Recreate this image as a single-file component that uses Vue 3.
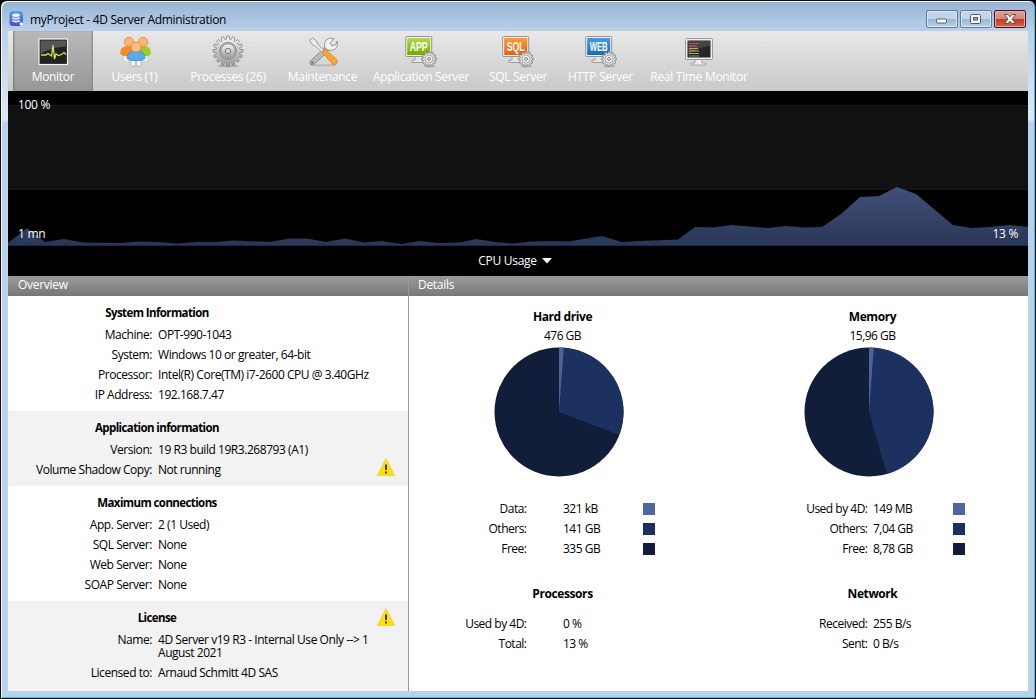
<script setup>
const tabs = [
  { id: 'monitor', label: 'Monitor', width: 80, active: true },
  { id: 'users', label: 'Users (1)', width: 83 },
  { id: 'processes', label: 'Processes (26)', width: 104 },
  { id: 'maintenance', label: 'Maintenance', width: 85 },
  { id: 'app', label: 'Application Server', width: 112, tag: 'APP', light: '#b4dc4a', dark: '#74a800' },
  { id: 'sql', label: 'SQL Server', width: 82, tag: 'SQL', light: '#ff9a3c', dark: '#e85f10' },
  { id: 'http', label: 'HTTP Server', width: 83, tag: 'WEB', light: '#4a9ce4', dark: '#1767b8' },
  { id: 'rtm', label: 'Real Time Monitor', width: 114 },
]

const sections = [
  {
    title: 'System Information',
    rows: [
      ['Machine:', 'OPT-990-1043'],
      ['System:', 'Windows 10 or greater, 64-bit'],
      ['Processor:', 'Intel(R) Core(TM) i7-2600 CPU @ 3.40GHz'],
      ['IP Address:', '192.168.7.47'],
    ],
  },
  {
    title: 'Application information',
    warn: 'low',
    rows: [
      ['Version:', '19 R3 build 19R3.268793 (A1)'],
      ['Volume Shadow Copy:', 'Not running'],
    ],
  },
  {
    title: 'Maximum connections',
    rows: [
      ['App. Server:', '2 (1 Used)'],
      ['SQL Server:', 'None'],
      ['Web Server:', 'None'],
      ['SOAP Server:', 'None'],
    ],
  },
  {
    title: 'License',
    warn: 'high',
    rows: [
      ['Name:', '4D Server v19 R3 - Internal Use Only --> 1 August 2021'],
      ['Licensed to:', 'Arnaud Schmitt 4D SAS'],
    ],
  },
]

const details = [
  {
    id: 'drive',
    title: 'Hard drive',
    total: '476 GB',
    split: 111,
    legend: [['Data:', '321 kB', 'c1'], ['Others:', '141 GB', 'c2'], ['Free:', '335 GB', 'c3']],
    second: 'Processors',
    rows: [['Used by 4D:', '0 %'], ['Total:', '13 %']],
  },
  {
    id: 'memory',
    title: 'Memory',
    total: '15,96 GB',
    split: 164,
    legend: [['Used by 4D:', '149 MB', 'c1'], ['Others:', '7,04 GB', 'c2'], ['Free:', '8,78 GB', 'c3']],
    second: 'Network',
    rows: [['Received:', '255 B/s'], ['Sent:', '0 B/s']],
  },
]

function slice(from, to) {
  const pt = (deg) => {
    const a = (deg * Math.PI) / 180
    return `${(65 + 64.5 * Math.sin(a)).toFixed(2)} ${(65 - 64.5 * Math.cos(a)).toFixed(2)}`
  }
  return `M65 65L${pt(from)}A64.5 64.5 0 ${to - from > 180 ? 1 : 0} 1 ${pt(to)}Z`
}

function gear(cx, cy, outer, inner, teeth) {
  const pts = []
  const step = (Math.PI * 2) / teeth
  for (let i = 0; i < teeth; i++) {
    const a = i * step - Math.PI / 2
    for (const [o, r] of [[-0.31, inner], [-0.22, outer], [0.22, outer], [0.31, inner]]) {
      pts.push(`${(cx + r * Math.cos(a + o * step)).toFixed(2)},${(cy + r * Math.sin(a + o * step)).toFixed(2)}`)
    }
  }
  return pts.join(' ')
}

const usage = [
  [0, 152], [19, 137], [37, 151], [56, 148], [75, 151.5], [112, 152], [132, 150.5], [149, 151], [169, 152.5],
  [189, 151], [207, 151], [225, 149.5], [262, 151], [281, 147.5], [299, 147.5], [318, 151], [337, 147.5],
  [356, 151.5], [374, 150], [393, 153], [412, 150], [430, 152], [452, 151.5], [468, 148], [487, 151], [505, 152.5],
  [523, 150.5], [542, 150], [560, 150.5], [594, 145], [614, 151], [632, 150], [670, 148.5], [687, 136],
  [705, 136.5], [724, 134], [759, 137], [778, 135], [795, 136.5], [814, 136], [833, 123], [852, 106], [871, 105],
  [889, 96], [908, 103], [945, 134], [963, 137], [982, 136], [1001, 134], [1020, 136],
]
const area = `0,154 ${usage.map((p) => p.join(',')).join(' ')} 1020,154`
</script>

<template>
  <div class="desktop">
    <div class="window">
      <header class="titlebar">
        <svg class="logo" width="16" height="16" viewBox="0 0 16 16">
          <defs>
            <linearGradient id="lg" x1="0" y1="0" x2="0" y2="1">
              <stop offset="0" stop-color="#4ea2f6" /><stop offset="1" stop-color="#4f49c9" />
            </linearGradient>
          </defs>
          <rect x="0.5" y="0" width="13.5" height="15" rx="3.5" fill="url(#lg)" />
          <ellipse cx="7" cy="4.2" rx="3.8" ry="1.7" fill="#fff" />
          <path d="M3.2 5.8c1 1.5 6.6 1.5 7.6 0v1.800c-1 1.500-6.600 1.500-7.600 0zM3.200 8.600c1 1.500 6.600 1.500 7.600 0v1.600c-1 1.600-6.600 1.600-7.600 0z" fill="#e4edff" />
          <circle cx="12.300" cy="13" r="1.700" fill="#fff" />
        </svg>
        <span class="caption">myProject - 4D Server Administration</span>
        <div class="controls">
          <div class="ctl">
            <svg width="30" height="16" viewBox="0 0 30 16"><rect x="9.500" y="8" width="10" height="4" rx="1" fill="#fff" stroke="#53606f" /></svg>
          </div>
          <div class="ctl">
            <svg width="30" height="16" viewBox="0 0 30 16">
              <rect x="9.500" y="3.500" width="10" height="9" rx="1" fill="#f6f6f6" stroke="#4f5c6c" />
              <rect x="12.500" y="6.500" width="4" height="2.500" fill="#8ea9c8" stroke="#4f5c6c" />
            </svg>
          </div>
          <div class="ctl close">
            <svg width="30" height="16" viewBox="0 0 30 16">
              <path d="M9.500 3.500H13L15 5.800L17 3.500H20.500L17 8L20.500 12.500H17L15 10.200L13 12.500H9.500L13 8Z" fill="#f7f4f4" stroke="#5b5560" />
            </svg>
          </div>
        </div>
      </header>

      <main class="client">
        <nav class="toolbar">
          <div v-for="t in tabs" :key="t.id" class="tab" :class="{ active: t.active }" :style="{ width: t.width + 'px' }">
            <svg class="icon" width="34" height="34" viewBox="0 0 34 34">
              <defs>
                <linearGradient id="metal" x1="0" y1="0" x2="0" y2="1">
                  <stop offset="0" stop-color="#f8f8f8" /><stop offset="1" stop-color="#9b9b9b" />
                </linearGradient>
                <linearGradient :id="'scr-' + t.id" x1="0" y1="0" x2="0" y2="1">
                  <stop offset="0" :stop-color="t.light || '#555'" /><stop offset="1" :stop-color="t.dark || '#222'" />
                </linearGradient>
              </defs>

              <g v-if="t.id === 'monitor'">
                <rect x="3" y="5" width="28.500" height="25.500" fill="#222" stroke="#f4f4f4" stroke-width="1.200" />
                <path d="M4.500 6.500h25.500v6Q15 13 4.500 20z" fill="#555" />
                <path d="M5 21h5l2-1.500 2 1.500 1.500 1 1.500-11 1.500 14 1.500-5 2.500 1.500 3-1 2.500-2 2 2" fill="none" stroke="#c5e850" stroke-width="1.300" />
              </g>

              <g v-else-if="t.id === 'users'" transform="translate(1 1.500)">
                <path d="M4.500 20h5v6h-5zM24 20h5v6h-5z" fill="#f1f1f1" stroke="#bbb" stroke-width=".5" />
                <path d="M1 18Q1 11 8 10.500H12Q15 11 15 19Q9 22 3 20Z" fill="#f68b25" />
                <path d="M19 18Q18 11 24 10.500H26Q32 11 32 18Q30 22 23 20Z" fill="#9fcb25" />
                <circle cx="10" cy="6.500" r="4.700" fill="#fbb673" stroke="#ea8535" stroke-width=".8" />
                <circle cx="24" cy="6.500" r="4.700" fill="#fbb673" stroke="#ea8535" stroke-width=".8" />
                <path d="M12 23h4.500v7.500H12zM17.500 23H22v7.500h-4.500z" fill="#f7f7f7" stroke="#aaa" stroke-width=".7" />
                <path d="M8 23Q8 16 14 15.500H20Q26 16 26 23Q22 26 17 25Q12 26 8 23Z" fill="#58a9e4" stroke="#3d8ac9" stroke-width=".7" />
                <circle cx="17" cy="11.500" r="5" fill="#fdbf85" stroke="#ea8535" stroke-width=".8" />
              </g>

              <g v-else-if="t.id === 'processes'">
                <ellipse cx="17" cy="32" rx="11" ry="1.500" fill="#8888" />
                <polygon :points="gear(17, 17, 15, 12, 16)" fill="url(#metal)" stroke="#828282" stroke-width=".8" />
                <circle cx="17" cy="17" r="8.500" fill="#b3b3b3" stroke="#8b8b8b" />
                <circle cx="17" cy="17" r="7" fill="url(#metal)" stroke="#8b8b8b" stroke-width=".6" />
                <circle cx="17" cy="17" r="2.700" fill="#d6d6d6" stroke="#777" stroke-width=".9" />
              </g>

              <g v-else-if="t.id === 'maintenance'">
                <ellipse cx="17" cy="31.300" rx="13" ry="1" fill="#9997" />
                <path d="M23 13L6.500 28.500" stroke="#858585" stroke-width="5.500" stroke-linecap="round" />
                <path d="M23 13L6.500 28.500" stroke="#bdbdbd" stroke-width="4" stroke-linecap="round" />
                <path d="M28 4.500L24 9L26 12L30 10.500L31 7Q33 14 27 16Q23 18 19 14Q17 10 20 6Q23 3 28 4.500Z" fill="#f0f0f0" stroke="#858585" stroke-width=".8" />
                <circle cx="6.500" cy="28.500" r="1.200" fill="#777" />
                <path d="M3.500 6l3-2 4 3 1 3 7 7-2 2-7-7-3-1z" fill="#eee" stroke="#858585" stroke-width=".8" />
                <path d="M16 18l3-3 12 11q1 5-4 4.500z" fill="#ffa52e" stroke="#d47b1e" stroke-width=".8" />
              </g>

              <g v-else-if="t.id === 'rtm'">
                <rect x="3.500" y="4.500" width="27" height="21" rx="1" fill="#ededed" stroke="#999" />
                <rect x="5.500" y="6.500" width="23" height="17" fill="#262626" />
                <path d="M6 7h22v5Q16 13 6 21z" fill="#454545" />
                <path d="M13 26v3H9v2h15v-2h-4v-3" fill="#eee" stroke="#999" stroke-width=".8" />
                <g stroke-width=".9">
                  <path d="M7 9.500h10" stroke="#df3a5a" /><path d="M7 12h8" stroke="#e66a58" /><path d="M7 14.500h9" stroke="#e9a84e" />
                  <path d="M7 17h10" stroke="#e0c45a" /><path d="M7 19.500h10" stroke="#a9b45a" /><path d="M7 22h10" stroke="#65a27a" />
                </g>
              </g>

              <g v-else>
                <path d="M11 22v4H8v2.500h14V24" fill="#e4e4e4" stroke="#999" stroke-width=".9" />
                <rect x="1.700" y="2.500" width="26" height="20" rx="1" fill="#f1f1f1" stroke="#969696" />
                <rect x="3.200" y="4" width="23" height="17" :fill="`url(#scr-${t.id})`" />
                <text x="14.700" y="17" class="tag" text-anchor="middle" textLength="18" lengthAdjust="spacingAndGlyphs">{{ t.tag }}</text>
                <ellipse cx="25.500" cy="32.500" rx="6" ry="1" fill="#9998" />
                <polygon :points="gear(25, 25, 7.500, 5.900, 12)" fill="#e0e0e0" stroke="#7c7c7c" stroke-width=".8" />
                <circle cx="25" cy="25" r="4" fill="#ededed" stroke="#8f8f8f" stroke-width=".7" />
                <circle cx="25" cy="25" r="1.500" fill="#ddd" stroke="#777" stroke-width=".8" />
              </g>
            </svg>
            <span>{{ t.label }}</span>
          </div>
        </nav>

        <section class="chart">
          <svg class="plot" width="1020" height="155" viewBox="0 0 1020 155">
            <defs>
              <linearGradient id="cpu" gradientUnits="userSpaceOnUse" x1="0" y1="96" x2="0" y2="154">
                <stop offset="0" stop-color="#3f5079" /><stop offset="1" stop-color="#293657" />
              </linearGradient>
            </defs>
            <rect y="14" width="1020" height="85" fill="#111" />
            <path d="M0 14.500H1020M0 98.500H1020" stroke="#181818" />
            <polygon :points="area" fill="url(#cpu)" />
            <path d="M0 154.500H1020" stroke="#1c2943" />
          </svg>
          <span class="mark top">100 %</span>
          <span class="mark left">1 mn</span>
          <span class="mark right">13 %</span>
          <div class="picker">
            <span>CPU Usage</span>
            <svg width="10" height="6" viewBox="0 0 10 6"><path d="M0 0H10L5 5.500Z" fill="#fff" /></svg>
          </div>
        </section>

        <div class="panes">
          <section class="overview">
            <h2>Overview</h2>
            <div v-for="s in sections" :key="s.title" class="group">
              <h3>{{ s.title }}</h3>
              <div v-for="r in s.rows" :key="r[0]" class="row">
                <span class="key">{{ r[0] }}</span>
                <span class="val">{{ r[1] }}</span>
              </div>
              <svg v-if="s.warn" class="warn" :class="s.warn" width="18" height="18" viewBox="0 0 18 18">
                <path d="M9 .5L17.700 17.500H.3Z" fill="#ffe000" stroke="#e8c63c" stroke-width=".6" />
                <path d="M8 6.500h2v5.500H8zM8 13.500h2v2H8z" fill="#3d3820" />
              </svg>
            </div>
          </section>

          <section class="details">
            <h2>Details</h2>
            <div class="columns">
              <article v-for="d in details" :key="d.id" :class="d.id">
                <h3>{{ d.title }}</h3>
                <p class="total">{{ d.total }}</p>
                <svg class="pie" width="130" height="130" viewBox="0 0 130 130">
                  <circle cx="65" cy="65" r="64.500" fill="#111e3a" />
                  <path :d="slice(4, d.split)" fill="#1c3160" />
                  <path :d="slice(0, 4.300)" fill="#4c629c" />
                </svg>
                <div class="legend">
                  <template v-for="l in d.legend" :key="l[0]">
                    <span class="key">{{ l[0] }}</span><span>{{ l[1] }}</span><i :class="l[2]"></i>
                  </template>
                </div>
                <h3 class="second">{{ d.second }}</h3>
                <div class="legend">
                  <template v-for="l in d.rows" :key="l[0]">
                    <span class="key">{{ l[0] }}</span><span>{{ l[1] }}</span><i></i>
                  </template>
                </div>
              </article>
            </div>
          </section>
        </div>
      </main>
    </div>
  </div>
</template>

<style>
body { margin: 0; overflow: hidden; }
</style>

<style scoped>
* { box-sizing: border-box; }
.desktop {
  width: 1036px; height: 699px; background: #000;
  font: 12px/20px "Open Sans", "Noto Sans", sans-serif; letter-spacing: -0.3px; color: #000;
}
.window {
  width: 1036px; height: 699px; padding: 0 6px 6px; border: 1px solid #111;
  border-radius: 7px 7px 0 0; background: linear-gradient(#98b3d2 0, #b9d1ea 30px, #dce8f5 118px, #b9d1ea 122px);
  box-shadow: inset 1px 1px 0 #f6faff, inset -1px -1px 0 #35c5e8;
}
.titlebar { height: 30px; display: flex; align-items: flex-start; padding: 9px 3px 0 2px; }
.logo { flex: none; margin-top: 1px; }
.caption { margin: 2px 0 0 5px; line-height: 16px; flex: 1; white-space: nowrap; }
.controls { display: flex; gap: 2px; }
.ctl {
  width: 32px; height: 18px; border: 1px solid #5f7b9c; border-radius: 2px; display: flex;
  background: linear-gradient(#c3d5e8 0 48%, #9bb6d3 50%, #b9d2ea); box-shadow: inset 0 0 0 1px #d9e6f3;
}
.ctl.close { border-color: #4c1420; background: linear-gradient(#e3a499 0, #d6867a 48%, #b93b25 50%, #d5674a); box-shadow: inset 0 0 0 1px #e5a99e; }
.ctl svg { flex: none; }
.client { width: 1020px; height: 660px; margin-left: 1px; background: #fff; }

.toolbar { height: 60px; padding-left: 5px; display: flex; background: linear-gradient(#e8e8e8, #c9c9c9); }
.tab { display: flex; flex-direction: column; align-items: center; padding-top: 3px; color: #fff; white-space: nowrap; flex: none; }
.tab span { margin-top: -1px; }
.tab.active { background: linear-gradient(#b9b9b9, #979797); box-shadow: inset 2px 0 2px -1px #777, inset -2px 0 2px -1px #858585; }
.icon { flex: none; }
.tag { font: bold 12px "Liberation Sans", Arial, sans-serif; letter-spacing: 0; fill: #fff; }

.chart { position: relative; height: 185px; background: #000; color: #fff; }
.plot { display: block; }
.mark { position: absolute; line-height: 16px; }
.top { left: 10px; top: 6px; }
.left { left: 10px; top: 135px; }
.right { right: 10px; top: 135px; }
.picker { height: 30px; display: flex; align-items: center; justify-content: center; gap: 5px; padding-right: 6px; }

.panes { display: flex; height: 415px; }
.overview { width: 400px; }
.details { flex: 1; border-left: 1px solid #999; }
h2 { margin: 0; height: 20px; padding-left: 10px; font-size: inherit; font-weight: 400; line-height: 18px; color: #fff; background: linear-gradient(#9b9b9b, #777); }
.details h2 { padding-left: 9px; }
h3 { margin: 0; font-size: inherit; font-weight: 700; line-height: 20px; text-align: center; letter-spacing: -0.4px; }
.group { position: relative; padding: 7px 0 6px; }
.group:nth-child(odd) { background: #f2f2f2; }
.group:last-child { padding-bottom: 8px; }
.group h3 { width: 298px; height: 22px; font-size: 11.5px; letter-spacing: -0.6px; }
.row { display: grid; grid-template-columns: 144px 222px; column-gap: 6px; line-height: 13px; padding: 3px 0 4px; letter-spacing: -0.45px; }
.key { text-align: right; white-space: nowrap; }
.warn { position: absolute; left: 369px; }
.warn.low { top: 47px; }
.warn.high { top: 7px; }

.columns { display: flex; gap: 3px; padding-top: 11px; }
article { width: 307px; }
.total { margin: 0; line-height: 18px; text-align: center; letter-spacing: -0.5px; }
.pie { display: block; margin: 2px 0 0 85px; }
.legend {
  display: grid; grid-template-columns: 154px 80px 12px; grid-auto-rows: 20px; align-items: center;
  margin-top: 22px; letter-spacing: -0.5px;
}
.drive .key { padding-right: 36.5px; }
.memory .key { padding-right: 5.5px; }
.legend i { height: 12px; }
.c1 { background: #4f659f; }
.c2 { background: #1e2f5e; }
.c3 { background: #131b3a; }
.second { margin-top: 25px; }
.second + .legend { margin-top: 10px; }
</style>
